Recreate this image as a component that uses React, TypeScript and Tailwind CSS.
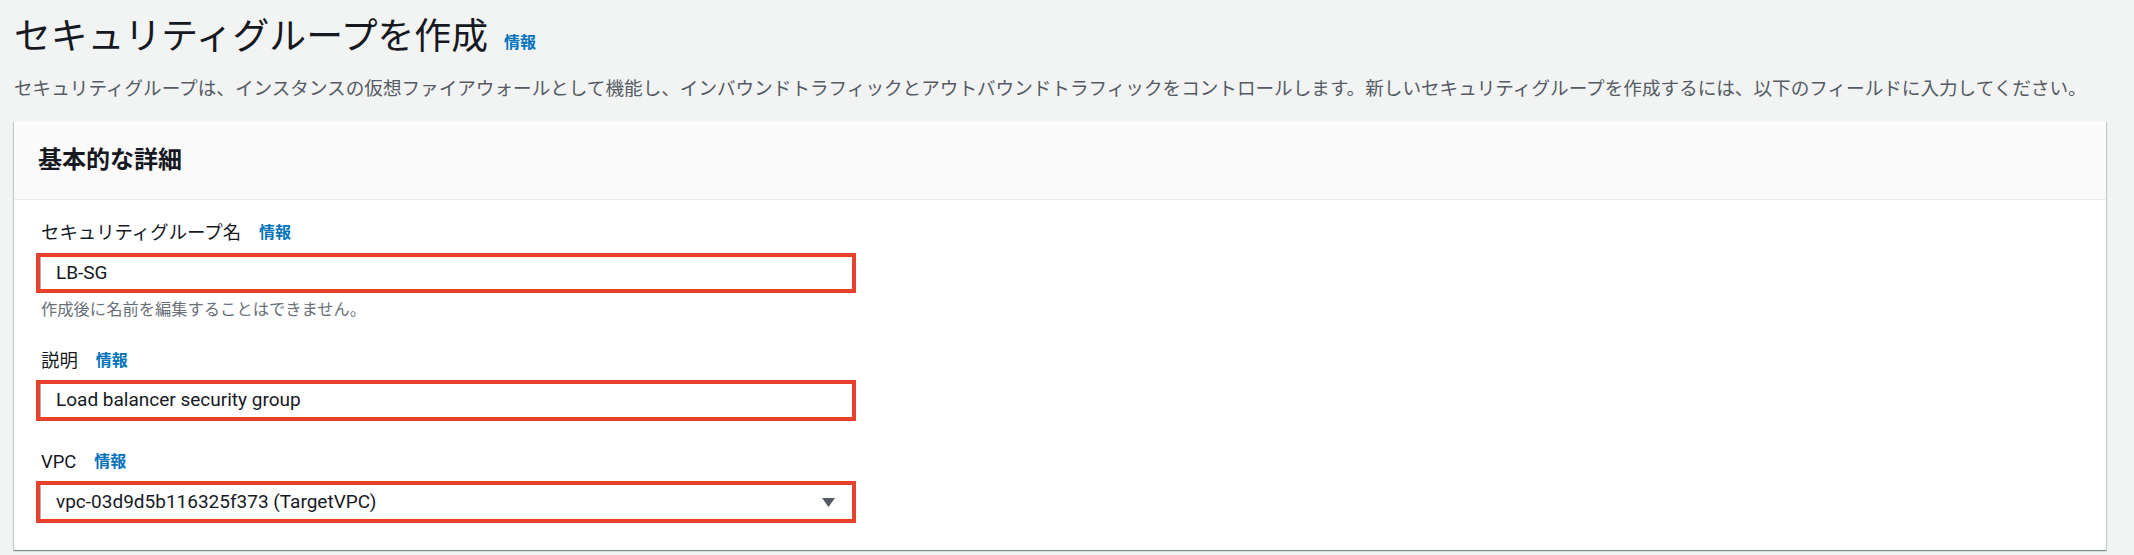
import type { ReactNode } from "react";

const font = { fontFamily: '"Roboto", "Noto Sans CJK JP", sans-serif' };

function InfoLink({ className = "" }: { className?: string }) {
  return <a className={`font-bold text-[16px] text-[#0073bb] ${className}`}>情報</a>;
}

function FieldLabel({ children }: { children: ReactNode }) {
  return (
    <div className="flex h-[26px] items-center pl-[5px] text-[18.4px] leading-[26px] text-[#16191f]">
      <span>{children}</span>
      <InfoLink className="ml-[18px]" />
    </div>
  );
}

function Highlighted({ height, children }: { height: string; children: ReactNode }) {
  return (
    <div className={`w-[820px] border-4 border-[#e8412c] bg-white ${height}`}>
      <div className="flex h-full items-center border-l border-[#aab7b8] pl-[15px] pr-[17px] text-[19px] text-[#16191f]">
        {children}
      </div>
    </div>
  );
}

export default function App() {
  return (
    <div className="h-[555px] w-full overflow-hidden bg-[#f2f3f3]" style={font}>
      <div className="flex h-[72px] items-center pl-[14px] pt-[2px]">
        <h1 className="text-[36.8px] font-normal leading-none text-[#16191f]">セキュリティグループを作成</h1>
        <InfoLink className="ml-[16px] mt-[12px]" />
      </div>
      <p className="h-[34px] pl-[14px] text-[18.6px] leading-[34px] text-[#545b64]">
        セキュリティグループは、インスタンスの仮想ファイアウォールとして機能し、インバウンドトラフィックとアウトバウンドトラフィックをコントロールします。新しいセキュリティグループを作成するには、以下のフィールドに入力してください。
      </p>

      <section className="ml-[14px] mr-[28px] mt-[15px] bg-white shadow-[0_1px_1px_0_rgba(0,28,36,0.3),1px_1px_1px_0_rgba(0,28,36,0.15),-1px_1px_1px_0_rgba(0,28,36,0.15)]">
        <header className="flex h-[79px] items-center border-b border-[#eaeded] bg-[#fafafa] pl-[24px]">
          <h2 className="text-[24px] font-bold text-[#16191f]">基本的な詳細</h2>
        </header>

        <div className="pb-[27px] pl-[22px] pt-[20px]">
          <FieldLabel>セキュリティグループ名</FieldLabel>
          <div className="mt-[7px]">
            <Highlighted height="h-[40px]">LB-SG</Highlighted>
          </div>
          <p className="mt-[7px] pl-[5px] text-[16.3px] leading-[20px] text-[#687078]">作成後に名前を編集することはできません。</p>

          <div className="mt-[28px]">
            <FieldLabel>説明</FieldLabel>
          </div>
          <div className="mt-[6px]">
            <Highlighted height="h-[41px]">Load balancer security group</Highlighted>
          </div>

          <div className="mt-[28px]">
            <FieldLabel>VPC</FieldLabel>
          </div>
          <div className="mt-[6px]">
            <Highlighted height="h-[42px]">
              <span className="flex-1">vpc-03d9d5b116325f373 (TargetVPC)</span>
              <svg width="13" height="9" viewBox="0 0 13 9" className="shrink-0">
                <path d="M0 0h13L6.5 9z" fill="#545b64" />
              </svg>
            </Highlighted>
          </div>
        </div>
      </section>
    </div>
  );
}
